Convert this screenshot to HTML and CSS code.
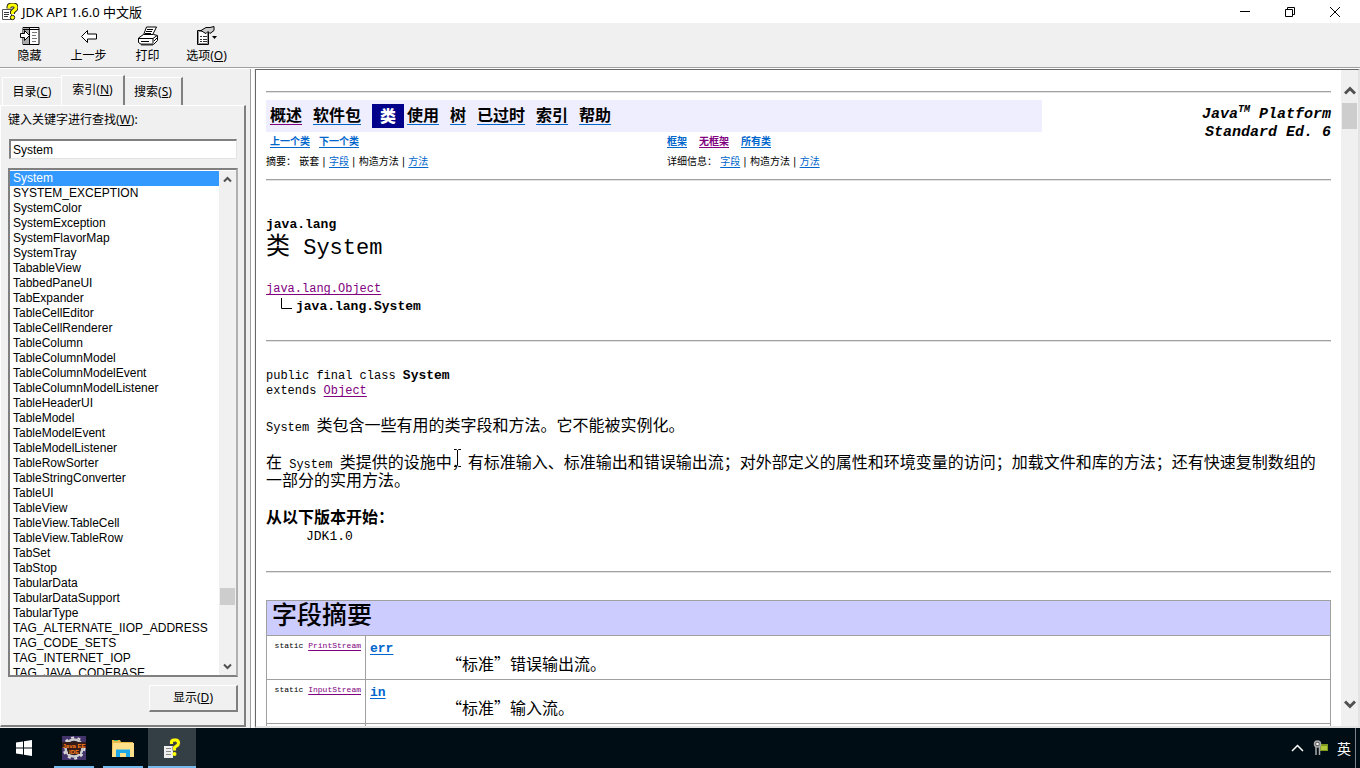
FILE: index.html
```html
<!DOCTYPE html>
<html lang="zh-CN">
<head>
<meta charset="utf-8">
<title>JDK API 1.6.0 中文版</title>
<link rel="stylesheet" href="styles.css">
</head>
<body>
<header class="titlebar">
  <svg class="app-icon" width="17" height="18" viewBox="0 0 17 18"><path d="M1.500 6.500h9v10h-9z" fill="#fff" stroke="#555"/><path d="M3 9.500h5M3 11.500h5M3 13.500h4" stroke="#333"/><path d="M8 5.500V4q0-2 3-2h1q3 0 3 2.500 0 1.500-1.500 2.500L11.500 9v2" fill="none" stroke="#222" stroke-width="5"/><path d="M8 5.500V4q0-2 3-2h1q3 0 3 2.500 0 1.500-1.500 2.500L11.500 9v2" fill="none" stroke="#ff0" stroke-width="3"/><circle cx="11.500" cy="14.500" r="2.200" fill="#ff0" stroke="#222"/></svg>
  <h1 class="window-title">JDK API 1.6.0 中文版</h1>
  <div class="window-buttons">
    <button aria-label="最小化"><svg width="12" height="12" viewBox="0 0 12 12"><path d="M1 5.500h10" stroke="#000"/></svg></button>
    <button aria-label="还原"><svg width="12" height="12" viewBox="0 0 12 12" fill="none" stroke="#000"><path d="M1.500 3.500h7v7h-7zM3.500 3.500v-2h7v7h-2"/></svg></button>
    <button aria-label="关闭"><svg width="12" height="12" viewBox="0 0 12 12"><path d="M1 1l10 10M11 1L1 11" stroke="#000"/></svg></button>
  </div>
</header>
<nav class="toolbar" aria-label="工具栏">
  <button><svg width="22" height="20" viewBox="0 0 22 20"><path d="M4 1.500h16v17H4z" fill="#fff" stroke="#000"/><path d="M4 2h6v16H4z" fill="#aaa"/><path d="M10.500 2v16M4 3.500h16" stroke="#000"/><path d="M13 6.500h5M13 9.500h4M13 12.500h5M13 15.500h4" stroke="#777"/><path d="M1.500 7.500h4v-3l5 5-5 5v-3h-4z" fill="#fff" stroke="#000"/></svg><span>隐藏</span></button>
  <button><svg width="22" height="20" viewBox="0 0 22 20"><path d="M3.500 10.500l6-6v3.500h9v5h-9v3.500z" fill="#fff" stroke="#000"/></svg><span>上一步</span></button>
  <button><svg width="22" height="20" viewBox="0 0 22 20"><path d="M6.500 9l3-8h10l-4 8" fill="#fff" stroke="#000"/><path d="M10 3.500h6M9 5.500h6M8 7.500h6" stroke="#000"/><path d="M1.500 12l5-3.500h10l4 1v5l-4 4h-12l-3-2z" fill="#fff" stroke="#000"/><path d="M2 12.500h14v5M16 12.500l4-3M4 15.500h8M17 15l3-3" stroke="#000" fill="none"/><path d="M4 18.500h12" stroke="#333" stroke-width="2"/></svg><span>打印</span></button>
  <button><svg width="22" height="20" viewBox="0 0 22 20"><path d="M1.500 4.500h11v14h-11z" fill="#fff" stroke="#000"/><path d="M2.500 5.500h9v12h-9z" fill="none" stroke="#888"/><path d="M4 10.500h2M7 10.500h4M4 13.500h2M7 13.500h4M4 15.500h2M7 15.500h4" stroke="#333"/><path d="M5 4.500l5-3h4l4-1v4l-4 3-2-2-2 2-2-1z" fill="#ccc" stroke="#000"/><path d="M16 10h5l-2.500 3z"/></svg><span>选项(<u>O</u>)</span></button>
</nav>
<main class="workspace">
  <aside class="sidebar">
    <div class="tabs" role="tablist">
      <button class="tab" role="tab">目录(<u>C</u>)</button>
      <button class="tab tab-active" role="tab" aria-selected="true">索引(<u>N</u>)</button>
      <button class="tab" role="tab">搜索(<u>S</u>)</button>
    </div>
    <section class="tab-panel">
      <label for="keyword">键入关键字进行查找(<u>W</u>):</label>
      <input id="keyword" class="keyword" type="text" value="System">
      <div class="listbox">
        <ul class="entries" role="listbox" aria-label="索引">
          <li class="selected" role="option" aria-selected="true">System</li>
          <li role="option">SYSTEM_EXCEPTION</li>
          <li role="option">SystemColor</li>
          <li role="option">SystemException</li>
          <li role="option">SystemFlavorMap</li>
          <li role="option">SystemTray</li>
          <li role="option">TabableView</li>
          <li role="option">TabbedPaneUI</li>
          <li role="option">TabExpander</li>
          <li role="option">TableCellEditor</li>
          <li role="option">TableCellRenderer</li>
          <li role="option">TableColumn</li>
          <li role="option">TableColumnModel</li>
          <li role="option">TableColumnModelEvent</li>
          <li role="option">TableColumnModelListener</li>
          <li role="option">TableHeaderUI</li>
          <li role="option">TableModel</li>
          <li role="option">TableModelEvent</li>
          <li role="option">TableModelListener</li>
          <li role="option">TableRowSorter</li>
          <li role="option">TableStringConverter</li>
          <li role="option">TableUI</li>
          <li role="option">TableView</li>
          <li role="option">TableView.TableCell</li>
          <li role="option">TableView.TableRow</li>
          <li role="option">TabSet</li>
          <li role="option">TabStop</li>
          <li role="option">TabularData</li>
          <li role="option">TabularDataSupport</li>
          <li role="option">TabularType</li>
          <li role="option">TAG_ALTERNATE_IIOP_ADDRESS</li>
          <li role="option">TAG_CODE_SETS</li>
          <li role="option">TAG_INTERNET_IOP</li>
          <li role="option">TAG_JAVA_CODEBASE</li>
        </ul>
        <div class="scrollbar">
          <button aria-label="向上"><svg width="9" height="7" viewBox="0 0 9 7"><path d="M1 5.500l3.500-3.500L8 5.500" fill="none" stroke="#505050" stroke-width="2"/></svg></button>
          <div class="track track-list"><div class="thumb"></div></div>
          <button aria-label="向下"><svg width="9" height="7" viewBox="0 0 9 7"><path d="M1 1.500L4.500 5 8 1.500" fill="none" stroke="#505050" stroke-width="2"/></svg></button>
        </div>
      </div>
      <button class="show-button">显示(<u>D</u>)</button>
    </section>
  </aside>
  <div class="splitter"></div>
  <div class="viewer">
    <article class="document">
      <hr>
      <div class="doc-nav">
        <nav class="nav-main">
          <a class="visited" href="#">概述</a><a href="#">软件包</a><strong class="current">类</strong><a href="#">使用</a><a href="#">树</a><a href="#">已过时</a><a href="#">索引</a><a href="#">帮助</a>
        </nav>
        <div class="edition">Java<sup>TM</sup> Platform<br>Standard Ed. 6</div>
        <div class="nav-small">
          <p class="nav-links"><a href="#">上一个类</a><a href="#">下一个类</a></p>
          <p>摘要： 嵌套 | <a href="#">字段</a> | 构造方法 | <a href="#">方法</a></p>
        </div>
        <div class="nav-small">
          <p class="nav-links nav-frames"><a href="#">框架</a><a class="visited" href="#">无框架</a><a href="#">所有类</a></p>
          <p>详细信息： <a href="#">字段</a> | 构造方法 | <a href="#">方法</a></p>
        </div>
      </div>
      <hr>
      <div class="class-heading">
        <p class="package">java.lang</p>
        <h2>类 System</h2>
      </div>
      <div class="tree">
        <a class="visited" href="#">java.lang.Object</a>
        <div class="tree-child"><svg width="12" height="12" viewBox="0 0 12 12"><path d="M1.500 0v10.500H12" fill="none" stroke="#000"/></svg><b>java.lang.System</b></div>
      </div>
      <hr>
      <p class="declaration">public final class <b>System</b><br>extends <a class="visited" href="#">Object</a></p>
      <p class="prose"><code>System </code>类包含一些有用的类字段和方法。它不能被实例化。</p>
      <p class="prose prose-detail">在<code> System </code>类提供的设施中，有标准输入、标准输出和错误输出流；对外部定义的属性和环境变量的访问；加载文件和库的方法；还有快速复制数组的一部分的实用方法。</p>
      <dl class="since"><dt>从以下版本开始：</dt><dd>JDK1.0</dd></dl>
      <hr>
      <table class="summary">
        <thead><tr><th colspan="2">字段摘要</th></tr></thead>
        <tbody>
          <tr><td class="type">static <a class="visited" href="#">PrintStream</a></td><td><a class="member" href="#">err</a><p>“标准”错误输出流。</p></td></tr>
          <tr><td class="type">static <a class="visited" href="#">InputStream</a></td><td><a class="member" href="#">in</a><p>“标准”输入流。</p></td></tr>
          <tr><td class="type"></td><td></td></tr>
        </tbody>
      </table>
      <svg class="text-cursor" width="9" height="18" viewBox="0 0 9 18"><path d="M1 .500h2.500l1 1 1-1H8M4.500 1v15M1 17.500h2.500l1-1 1 1H8" fill="none" stroke="#000"/></svg>
    </article>
    <div class="scrollbar scrollbar-page">
      <button aria-label="向上"><svg width="12" height="10" viewBox="0 0 12 10"><path d="M1 7.500L6 2.500l5 5" fill="none" stroke="#505050" stroke-width="3"/></svg></button>
      <div class="track"><div class="thumb"></div></div>
      <button aria-label="向下"><svg width="12" height="10" viewBox="0 0 12 10"><path d="M1 2.500l5 5 5-5" fill="none" stroke="#505050" stroke-width="3"/></svg></button>
    </div>
  </div>
</main>
<footer class="taskbar">
  <button class="task" aria-label="开始"><svg width="16" height="16" viewBox="0 0 16 16" fill="#fff"><path d="M0 2.500l7-1v6H0zM8 1.300L16 0v7.500H8zM0 8.500h7v6l-7-1zM8 8.500h8V16l-8-1.300z"/></svg></button>
  <button class="task running" aria-label="Java EE IDE"><svg width="24" height="24" viewBox="0 0 24 24"><path d="M0 0h24v24H0z" fill="#43336b"/><circle cx="12" cy="12" r="8.500" fill="#241c2c" stroke="#ccc" stroke-width="2.500"/><circle cx="12" cy="12" r="10.500" fill="none" stroke="#ddd" stroke-width="2" stroke-dasharray="3 3.600"/><path d="M0 6h24v6H0zM6 12h12v6H6z" fill="#351c18"/><text x="12" y="12" text-anchor="middle" class="ide-text">Java EE</text><text x="12" y="18" text-anchor="middle" class="ide-text">IDE</text></svg></button>
  <button class="task running" aria-label="文件资源管理器"><svg width="22" height="19" viewBox="0 0 22 19"><path d="M0 1h8l1 2h12v15H0z" fill="#e9b949"/><path d="M1 4h21v14H0z" fill="#ffe08a"/><path d="M2 1.500h4" stroke="#3ab26a"/><path d="M4 18v-7.500h14V18h-4v-4H8v4z" fill="#1fa8e8"/></svg></button>
  <button class="task running active" aria-label="JDK API"><svg width="18" height="21" viewBox="0 0 18 21"><path d="M1 8h9v12H1z" fill="#eee"/><path d="M3 10.500h5M3 13.500h5M3 16.500h5" stroke="#888"/><path d="M8.500 6V4q0-2 3-2h1q3 0 3 3 0 2-2 3l-2 1.500v3" fill="none" stroke="#554" stroke-width="4"/><path d="M8.500 6V4q0-2 3-2h1q3 0 3 3 0 2-2 3l-2 1.500v3" fill="none" stroke="#ff0" stroke-width="3"/><circle cx="11.500" cy="16" r="2" fill="#ff0"/></svg></button>
  <div class="tray">
    <button aria-label="显示隐藏的图标"><svg width="13" height="8" viewBox="0 0 13 8"><path d="M1 7l5.500-5.500L12 7" fill="none" stroke="#fff" stroke-width="1.500"/></svg></button>
    <button aria-label="设备"><svg width="15" height="16" viewBox="0 0 15 16"><path d="M7 4h8v7H7z" fill="#7d9a1e"/><path d="M8 6h6v4H8z" fill="#b4c83c"/><circle cx="4.500" cy="4" r="3" fill="#555" stroke="#aaa" stroke-width="1.500"/><circle cx="4.500" cy="4" r="1.300" fill="#fff"/><path d="M3 7v8M6.500 7v8" stroke="#aaa" stroke-width="1.500"/></svg></button>
    <button class="ime">英</button>
  </div>
</footer>
</body>
</html>
```

FILE: styles.css
```css
* { box-sizing: border-box; }
body {
  margin: 0;
  height: 100vh;
  display: flex;
  flex-direction: column;
  overflow: hidden;
  background: #f0f0f0;
  color: #000;
  font: 12px/16px "Liberation Sans", "Noto Sans CJK SC", sans-serif;
}
button { font: inherit; color: inherit; background: none; border: 0; padding: 0; }
p, h1, h2, ul, dl, dd { margin: 0; padding: 0; }
svg { display: block; flex: none; }

.titlebar { flex: none; height: 23px; display: flex; align-items: center; background: #fff; }
.app-icon { margin: 0 4px 0 1px; }
.window-title { font: 13px/16px "Noto Sans", "Noto Sans CJK SC", sans-serif; flex: 1; }
.window-buttons { display: flex; padding-right: 3px; }
.window-buttons button { width: 45px; height: 20px; display: grid; place-items: center; }

.toolbar { flex: none; height: 45px; display: flex; padding: 3px 0 0; border-bottom: 1px solid #a0a0a0; font-family: "Noto Sans", "Noto Sans CJK SC", sans-serif; }
.toolbar button { width: 59px; display: flex; flex-direction: column; align-items: center; line-height: 20px; }

.workspace { flex: 1; min-height: 0; display: flex; border-top: 1px solid #fff; }
.sidebar { flex: none; width: 247px; padding: 6px 1px 1px 0; display: flex; flex-direction: column; }
.tabs { display: flex; align-items: flex-end; height: 30px; padding-left: 2px; font-family: "Noto Sans", "Noto Sans CJK SC", sans-serif; }
.tab { height: 28px; width: 59px; border: solid; border-width: 1px 0 0 1px; border-color: #fff; }
.tab:last-child { border-right: 2px solid #808080; border-left: 0; width: 58px; }
.tab-active { height: 30px; width: 64px; border-right: 2px solid #808080; padding-bottom: 1px; }
.tab-panel { flex: 1; min-height: 0; display: flex; flex-direction: column; padding: 5px 6px 13px 7px; border: solid; border-width: 1px 2px 2px 1px; border-color: #fff #808080 #808080 #fff; }
.tab-panel label { font-family: "Noto Sans", "Noto Sans CJK SC", sans-serif; line-height: 18px; }
.keyword { margin: 10px 1px 9px; height: 20px; padding: 0 2px; font: inherit; border: solid; border-width: 2px 1px 1px 2px; border-color: #808080 #e3e3e3 #e3e3e3 #808080; background: #fff; }
.listbox { flex: 1; min-height: 0; display: flex; padding-top: 1px; border: 2px solid #808080; border-right-color: #b0b0b0; background: #fff; }
.entries { flex: 1; overflow: hidden; list-style: none; line-height: 15px; }
.entries li { padding-left: 3px; }
.selected { background: #3399ff; color: #fff; }
.scrollbar { flex: none; width: 17px; display: flex; flex-direction: column; background: #f0f0f0; }
.scrollbar button { height: 17px; display: grid; place-items: center; }
.track { flex: 1; display: flex; flex-direction: column; padding: 0 1px; }
.track-list { justify-content: flex-end; padding-bottom: 53px; }
.thumb { height: 17px; background: #cdcdcd; }
.show-button { align-self: flex-end; margin-top: 8px; width: 89px; height: 27px; border: solid; border-width: 1px 2px 2px 1px; border-color: #fff #808080 #808080 #fff; font-family: "Noto Sans", "Noto Sans CJK SC", sans-serif; }
.splitter { flex: none; width: 8px; border-left: 3px solid #f0f0f0; border-right: 1px solid #f0f0f0; background: linear-gradient(to right, #a0a0a0 1px, #fff 1px); }

.viewer { flex: 1; min-width: 0; display: flex; background: #fff; border: solid; border-width: 1px 2px 2px 1px; border-color: #696969 #e3e3e3 #e3e3e3 #696969; }
.document { flex: 1; min-width: 0; position: relative; overflow: hidden; padding: 21px 10px 0; font: 16px/18px "Liberation Mono", "Noto Sans CJK SC", monospace; }
hr { margin: 0; height: 2px; border: 0; border-top: 1px solid #a0a0a0; border-bottom: 1px solid #e3e3e3; }
a { color: #0066cc; text-decoration-color: #0066cc; text-underline-offset: 2px; }
a.visited { color: #800080; text-decoration-color: #800080; }

.doc-nav { display: grid; grid-template-columns: 401fr 375fr 289fr; margin-top: 7px; }
.nav-main { grid-column: span 2; display: flex; align-items: center; gap: 11px; height: 32px; padding-left: 4px; background: #eeeeff; font: bold 16px/20px "Noto Sans CJK SC", sans-serif; }
.nav-main a, .nav-main a.visited { color: #000; text-underline-offset: 3px; padding-bottom: 4px; }
.current { padding: 1px 8px 3px; margin-right: -8px; background: #00008b; color: #fff; }
.edition { grid-row: span 2; padding-top: 6px; text-align: right; font-size: 15px; font-weight: bold; font-style: italic; }
.edition sup { font-size: 10px; line-height: 8px; }
.nav-small { padding-bottom: 7px; font: 10px/20px "DejaVu Sans", "Noto Sans CJK SC", sans-serif; }
.nav-links { display: flex; gap: 9px; padding-left: 4px; font-weight: bold; }
.nav-frames { gap: 12px; padding-left: 0; }

.class-heading { padding-top: 35px; }
.package { font-size: 13px; font-weight: bold; }
.class-heading h2 { font-size: 22px; font-weight: normal; line-height: 28px; }
.class-heading h2::first-letter { font-size: 24px; }
.tree { padding: 17px 0 24px; font-size: 12px; }
.tree-child { display: flex; gap: 4px; padding-left: 14px; font-size: 13px; }
.declaration { padding-top: 26px; font-size: 12px; line-height: 15px; }
.declaration b { font-size: 13px; }
.prose { margin-top: 19px; }
.prose code { font: 12px/16px "Liberation Mono", monospace; }
.since { padding: 19px 0 25px; }
.since dt { font-weight: bold; }
.since dd { margin-left: 40px; font-size: 13px; }

.summary { width: 100%; margin-top: 27px; border-collapse: collapse; }
.summary th, .summary td { border: 1px solid #a0a0a0; vertical-align: top; }
.summary th { padding: 3px 5px; height: 35px; background: #ccccff; text-align: left; font-size: 25px; font-weight: 500; line-height: 28px; }
.summary td { height: 44px; padding: 5px 4px 2px; line-height: 15px; }
.summary .type { width: 99px; text-align: right; white-space: nowrap; font-size: 8px; line-height: 10px; }
.summary p { padding-left: 76px; font-family: "Noto Sans CJK SC", sans-serif; }
.member { font-size: 13px; font-weight: bold; }
.text-cursor { position: absolute; left: 197px; top: 379px; }

.scrollbar-page { width: 17px; padding-top: 9px; }
.scrollbar-page button { height: 24px; }
.scrollbar-page .track + button { height: 44px; }
.scrollbar-page .thumb { height: 26px; }

.taskbar { flex: none; height: 40px; display: flex; gap: 1px; background: #000d15; color: #fff; }
.task { width: 48px; height: 40px; display: grid; place-items: center; }
.running { border-bottom: 2px solid #76b9ed; padding-top: 2px; width: 40px; margin: 0 4px 0 5px; }
.running + .running { margin-left: 4px; }
.running.active { width: 48px; margin-left: 0; background: #333e45; }
.ide-text { font: bold 6px "Liberation Sans", sans-serif; fill: #ff7e1c; }
.tray { margin: 0 4px 0 auto; padding-right: 4px; display: flex; align-items: center; gap: 9px; border-right: 1px solid #7b8388; }
.ime { font: 14px/20px "Noto Sans CJK SC", sans-serif; }
```
